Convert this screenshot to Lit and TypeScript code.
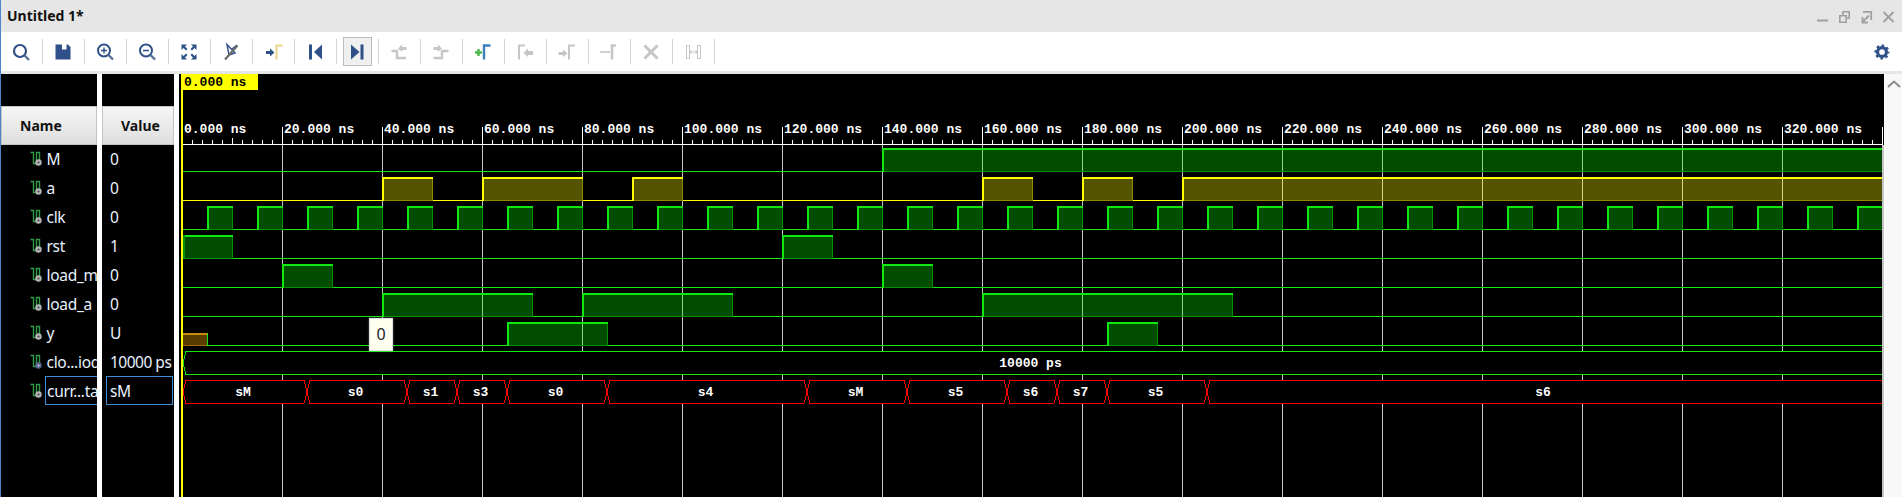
import { LitElement, css, html, svg } from 'lit';
import { customElement } from 'lit/decorators.js';

const X0 = 183;
const X_END = 1883;
const nsToX = (ns: number) => Math.floor(182.5 + ns * 5);
const rowHigh = (i: number) => 148 + i * 29;
const rowLow = (i: number) => 171 + i * 29;

type Tone = { line: string; fill: string; edge: string };
const GREEN: Tone = { line: '#10e810', fill: 'rgba(0,255,0,0.3)', edge: '#009000' };
const YELLOW: Tone = { line: '#ffff00', fill: 'rgba(255,255,0,0.33)', edge: '#8f8a00' };

const clkHighs: [number, number][] = [];
for (let t = 5; t < 340; t += 10) clkHighs.push([t, t + 5]);

const DIGITAL: { row: number; tone: Tone; highs: [number, number][] }[] = [
  { row: 0, tone: GREEN, highs: [[140, 340]] },
  { row: 1, tone: YELLOW, highs: [[40, 50], [60, 80], [90, 100], [160, 170], [180, 190], [200, 340]] },
  { row: 2, tone: GREEN, highs: clkHighs },
  { row: 3, tone: GREEN, highs: [[0, 10], [120, 130]] },
  { row: 4, tone: GREEN, highs: [[20, 30], [140, 150]] },
  { row: 5, tone: GREEN, highs: [[40, 70], [80, 110], [160, 210]] },
  { row: 6, tone: GREEN, highs: [[65, 85], [185, 195]] },
];

const STATES: [string, number, number][] = [
  ['sM', 0, 25], ['s0', 25, 45], ['s1', 45, 55], ['s3', 55, 65], ['s0', 65, 85], ['s4', 85, 125],
  ['sM', 125, 145], ['s5', 145, 165], ['s6', 165, 175], ['s7', 175, 185], ['s5', 185, 205], ['s6', 205, 340],
];

const SIGNALS = [
  ['M', '0'], ['a', '0'], ['clk', '0'], ['rst', '1'], ['load_m', '0'], ['load_a', '0'], ['y', 'U'],
  ['clo...iod', '10000 ps'], ['curr...tat', 'sM'],
];

const NAVY = '#2f5088';
const MUTED = '#c6c6c6';

const gamma = (x: number, color: string) =>
  svg`<path d="M${x} 19.5V5.5H${x + 6}" fill="none" stroke=${color} stroke-width="2"/>`;

const TOOL_ICONS = [
  svg`<circle cx="11" cy="11" r="6" fill="none" stroke=${NAVY} stroke-width="2.2"/><path d="M15.5 15.5L20 20" stroke="#5a6f96" stroke-width="2.4"/>`,
  svg`<path d="M4.5 4.5H11V9.5H15.5V4.5H17L19.5 7V19.5H4.5Z" fill=${NAVY}/>`,
  svg`<circle cx="11" cy="10.5" r="6" fill="none" stroke=${NAVY} stroke-width="2"/><path d="M8 10.5H14M11 7.5V13.5" stroke=${NAVY} stroke-width="1.4"/><path d="M15.5 15L20 19.5" stroke="#5a6f96" stroke-width="2.4"/>`,
  svg`<circle cx="11" cy="10.5" r="6" fill="none" stroke=${NAVY} stroke-width="2"/><path d="M8 10.5H14" stroke=${NAVY} stroke-width="1.6"/><path d="M15.5 15L20 19.5" stroke="#5a6f96" stroke-width="2.4"/>`,
  svg`<path d="M4.5 4.5H10L8 6.5L10.5 9L9 10.5L6.5 8L4.5 10ZM19.5 4.5H14L16 6.5L13.5 9L15 10.5L17.5 8L19.5 10ZM4.5 19.5H10L8 17.5L10.5 15L9 13.5L6.5 16L4.5 14ZM19.5 19.5H14L16 17.5L13.5 15L15 13.5L17.5 16L19.5 14Z" fill=${NAVY}/>`,
  svg`<path d="M8 4.5L16 13L10 15ZM18 5L13 9" fill="none" stroke=${NAVY} stroke-width="1.4"/><path d="M6 19.5L18.5 5.5" stroke="#6a6a6a" stroke-width="2.2"/>`,
  svg`<path d="M5 11H9V8.5L13.5 12.5L9 16.5V14H5Z" fill=${NAVY}/>${gamma(15.5, '#ead38c')}`,
  svg`<path d="M6 4.5H9V19.5H6Z" fill=${NAVY}/><path d="M19 4.5V19.5L11 12Z" fill=${NAVY}/>`,
  svg`<path d="M6 4.5V19.5L14.5 12Z" fill=${NAVY}/><path d="M15.5 4.5H18.5V19.5H15.5Z" fill=${NAVY}/>`,
  svg`<path d="M4.5 11H10V18H19" fill="none" stroke=${MUTED} stroke-width="2.4"/><path d="M19.5 7H15V4.5L11 8.5L15 12V10H19.5Z" fill=${MUTED}/>`,
  svg`<path d="M4.5 18H13V11H19.5" fill="none" stroke=${MUTED} stroke-width="2.4"/><path d="M4.5 7H9V4.5L13 8.5L9 12V10H4.5Z" fill=${MUTED}/>`,
  svg`<path d="M4 12.5H11M7.5 9V16" stroke="#4cb84c" stroke-width="2.4"/><path d="M13 19.5V5.5H19.5" fill="none" stroke="#3d80b8" stroke-width="2.4"/>`,
  svg`${gamma(6, MUTED)}<path d="M20 11H15V8.5L10.5 13L15 17V15H20Z" fill=${MUTED}/>`,
  svg`<path d="M3.5 12H8V9.5L12.5 13.5L8 17V15H3.5Z" fill=${MUTED}/>${gamma(14, MUTED)}`,
  svg`<path d="M3 12H13" stroke=${MUTED} stroke-width="1.6"/><path d="M15 19.5V5.5H19" fill="none" stroke=${MUTED} stroke-width="2.6"/>`,
  svg`<path d="M5.5 5.5L18.5 18.5M18.5 5.5L5.5 18.5" stroke=${MUTED} stroke-width="3"/>`,
  svg`<path d="M5.5 5.5H8.5V18.5H5.5ZM16.5 5.5H19.5V18.5H16.5Z" fill="none" stroke=${MUTED}/><path d="M9 12H16M10.5 10L9 12L10.5 14M14.5 10L16 12L14.5 14" fill="none" stroke=${MUTED}/>`,
];

@customElement('app-root')
export class AppRoot extends LitElement {
  private waveIcon(clock: boolean) {
    return html`<svg class="sig" width="14" height="18" viewBox="0 0 14 18">
      <path d="M0.5 1.5H3.5V12.5H6.5V1.5H9.5V9" fill="none" stroke="#2f9a48" stroke-width="1.4"/>
      <circle cx="8.5" cy="11.5" r="3.2" fill=${clock ? '#56668f' : '#b4b4b4'}/>
      <circle cx="8.5" cy="11.5" r="1.1" fill=${clock ? '#c8d0e8' : '#4a4a4a'}/>
    </svg>`;
  }

  private ruler() {
    const ticks = [];
    for (let ns = 0; ns <= 340; ns += 2) {
      const top = ns % 20 === 0 ? 127 : ns % 10 === 0 ? 138 : 140;
      ticks.push(svg`<rect x=${nsToX(ns)} y=${top} width="1" height=${144 - top} fill="#fff"/>`);
    }
    const labels = [];
    for (let ns = 0; ns <= 320; ns += 20) {
      labels.push(svg`<text class="ruler" x=${nsToX(ns) + 2} y="133">${ns}.000 ns</text>`);
    }
    return svg`<rect x=${X0} y="144" width=${X_END - X0} height="1" fill="#fff"/>${ticks}${labels}`;
  }

  private grid() {
    const lines = [];
    for (let ns = 20; ns <= 340; ns += 20) {
      lines.push(svg`<rect x=${nsToX(ns)} y="145" width="1" height="352" fill="#c4c4c4"/>`);
    }
    return lines;
  }

  private digital(row: number, tone: Tone, highs: [number, number][]) {
    const top = rowHigh(row);
    const low = rowLow(row);
    const parts = [];
    let cursor = row === 6 ? nsToX(5) : X0;
    for (const [a, b] of highs) {
      const xa = Math.max(nsToX(a), X0);
      const xb = nsToX(b);
      if (xa > cursor) parts.push(svg`<rect x=${cursor} y=${low} width=${xa - cursor} height="1" fill=${tone.line}/>`);
      parts.push(svg`
        <rect x=${xa} y=${top} width=${xb - xa} height=${low - top} fill=${tone.fill}/>
        <rect x=${xa} y=${low} width=${xb - xa + 1} height="1" fill=${tone.edge}/>
        <rect x=${xb} y=${top} width="1" height=${low - top} fill=${b === 340 ? 'none' : tone.edge}/>
        <rect x=${xa} y=${top} width=${xb - xa + 1} height="2" fill=${tone.line}/>
        <rect x=${xa} y=${top} width="2" height=${low - top + 1} fill=${a === 0 ? tone.edge : tone.line}/>`);
      cursor = xb + 1;
    }
    if (cursor < X_END) parts.push(svg`<rect x=${cursor} y=${low} width=${X_END - cursor} height="1" fill=${tone.line}/>`);
    return parts;
  }

  private unknownStart() {
    const x1 = nsToX(5);
    return svg`
      <rect x=${X0} y="333" width=${x1 - X0} height="12" fill="#5a3c00"/>
      <rect x=${X0} y="333" width=${x1 - X0} height="2" fill="#c98a10"/>
      <rect x=${X0} y="345" width=${x1 - X0} height="1" fill="#a06a00"/>
      <rect x=${x1} y="333" width="1" height="13" fill=${GREEN.line}/>`;
  }

  private busSegment(row: number, color: string, a: number, b: number, label: string) {
    const top = rowHigh(row) + 0.5;
    const low = rowLow(row) + 0.5;
    const mid = (top + low) / 2;
    const xa = nsToX(a);
    const xb = nsToX(b);
    const startTip = a === 0 ? 4 : 3;
    const left = a === 0 ? `${X0},${mid}` : `${xa},${mid}`;
    const right = b === 340 ? `${X_END},${top} ${X_END},${low}` : `${xb - 3},${top} ${xb},${mid} ${xb - 3},${low}`;
    const points = `${left} ${xa + startTip},${top} ${right} ${xa + startTip},${low}`;
    const center = (xa + Math.min(xb, X_END)) / 2 - 1.5;
    return svg`<polygon points=${points} fill="#000" stroke=${color} stroke-width="1"/>
      <text class="bus" x=${center} y=${mid + 4}>${label}</text>`;
  }

  render() {
    return html`
      <div class="title-bar">
        <span class="title">Untitled 1*</span>
        <div class="win-controls">
          <svg width="88" height="20" viewBox="0 0 88 20">
            <path d="M9 14.5H20" stroke="#a0a0a0" stroke-width="2"/>
            <path d="M31.8 9.8H38.2V16.2H31.8ZM35 9V5.8H41.2V12H38.5" fill="none" stroke="#a0a0a0" stroke-width="1.6"/>
            <path d="M55 5.8H63.2V14M54.5 16L61 9.5M54.5 11V16.5H60" fill="none" stroke="#a0a0a0" stroke-width="1.8"/>
            <path d="M75.5 6L85.5 16M85.5 6L75.5 16" stroke="#a0a0a0" stroke-width="2"/>
          </svg>
        </div>
      </div>
      <div class="toolbar">
        ${TOOL_ICONS.map(
          (icon, i) => html`<div class="tool">
            <span class=${i === 8 ? 'tool-face active' : 'tool-face'}>
              <svg width="24" height="24" viewBox="0 0 24 24">${icon}</svg>
            </span>
          </div>`,
        )}
        <svg class="gear" width="16" height="16" viewBox="0 0 18 18">
          <circle cx="9" cy="9" r="5" fill="none" stroke=${NAVY} stroke-width="3.6"/>
          <circle cx="9" cy="9" r="7.2" fill="none" stroke=${NAVY} stroke-width="2.6" stroke-dasharray="2.83 2.83" stroke-dashoffset="1.4"/>
        </svg>
      </div>
      <div class="divider"></div>
      <div class="main">
        <div class="col names">
          <div class="head name-head">Name</div>
          ${SIGNALS.map(
            ([name], i) => html`<div class="row name-row">
              ${this.waveIcon(i === 7)}
              <span class=${i === 8 ? 'label picked' : 'label'}>${name}</span>
            </div>`,
          )}
        </div>
        <div class="col values">
          <div class="head value-head">Value</div>
          ${SIGNALS.map(
            ([, value], i) => html`<div class="row value-row">
              <span class=${i === 8 ? 'val picked' : 'val'}>${value}</span>
            </div>`,
          )}
        </div>
        <div class="wave">
          <svg width="1705" height="423" viewBox="179 74 1705 423" shape-rendering="crispEdges">
            ${this.grid()}
            ${this.ruler()}
            ${DIGITAL.map((d) => this.digital(d.row, d.tone, d.highs))}
            ${this.unknownStart()}
            ${this.busSegment(7, GREEN.line, 0, 340, '10000 ps')}
            ${STATES.map(([label, a, b]) => this.busSegment(8, '#ff0000', a, b, label))}
            <rect x="181" y="74" width="2" height="423" fill="#ffff00"/>
            <rect x="1882" y="145" width="2" height="352" fill="#c4c4c4"/>
            <rect x="182" y="74" width="76" height="16" fill="#ffff00"/>
            <text class="marker" x="184" y="86">0.000 ns</text>
          </svg>
          <div class="tip">0</div>
        </div>
        <div class="scroll">
          <svg width="14" height="10" viewBox="0 0 14 10">
            <path d="M1 8L7 2.5L13 8" fill="none" stroke="#8a8a8a" stroke-width="2"/>
          </svg>
        </div>
      </div>
    `;
  }

  static styles = css`
    :host {
      display: block;
      box-sizing: border-box;
      width: 1902px;
      height: 497px;
      overflow: hidden;
      border-left: 1px solid #4a86d0;
      background: #fff;
      font-family: 'Noto Sans', sans-serif;
    }

    .title-bar {
      display: flex;
      align-items: center;
      justify-content: space-between;
      height: 32px;
      padding: 0 6px 2px 6px;
      box-sizing: border-box;
      background: #e6e6e6;
    }

    .title {
      font-size: 14px;
      font-weight: 700;
      color: #111;
    }

    .win-controls {
      display: flex;
      align-items: center;
      height: 20px;
      margin-top: 2px;
    }

    .toolbar {
      display: flex;
      align-items: center;
      height: 39px;
      background: #fff;
    }

    .tool {
      display: flex;
      align-items: center;
      justify-content: center;
      box-sizing: border-box;
      width: 42px;
      height: 25px;
      border-right: 1px solid #d4d4d4;
    }

    .tool-face {
      display: flex;
      align-items: center;
      justify-content: center;
      box-sizing: border-box;
      flex: none;
      width: 29px;
      height: 29px;
      border: 1px solid transparent;
    }

    .tool-face svg {
      flex: none;
      margin-right: 2px;
    }

    .tool-face.active {
      border-color: #bdbdbd;
      background: #f0f0f0;
    }

    .gear {
      margin-left: auto;
      margin-right: 12px;
    }

    .divider {
      height: 3px;
      background: #e6e6e6;
    }

    .main {
      display: flex;
      height: 423px;
    }

    .col {
      flex: none;
      overflow: hidden;
      background: #000;
      padding-top: 32px;
      box-sizing: border-box;
    }

    .names {
      width: 96px;
      margin-right: 5px;
    }

    .values {
      width: 72px;
      margin-right: 5px;
    }

    .head {
      box-sizing: border-box;
      height: 39px;
      border: 1px solid #c4c4c4;
      background: linear-gradient(#f6f6f6, #dedede);
      color: #111;
      font-size: 14px;
      font-weight: 700;
      line-height: 37px;
    }

    .name-head {
      padding-left: 18px;
    }

    .value-head {
      padding-left: 18px;
    }

    .row {
      display: flex;
      align-items: center;
      height: 29px;
      color: #e8f2ff;
      font-size: 15.5px;
      letter-spacing: -0.3px;
      white-space: nowrap;
    }

    .value-row {
      letter-spacing: -0.5px;
    }

    .sig {
      flex: none;
      margin-left: 29px;
    }

    .label {
      margin-left: 2.5px;
      margin-bottom: 2px;
    }

    .val {
      margin-left: 8px;
      margin-bottom: 2px;
    }

    .picked {
      box-sizing: border-box;
      display: flex;
      align-items: center;
      height: 29px;
      margin-top: -2px;
      margin-bottom: 0;
      border: 1px solid #3f8fd8;
    }

    .label.picked {
      flex: none;
      width: 60px;
      margin-left: 1px;
      padding-left: 1px;
    }

    .val.picked {
      flex: none;
      width: 67px;
      margin-left: 4px;
      padding-left: 3px;
    }

    .wave {
      position: relative;
      flex: none;
      width: 1705px;
      background: #000;
    }

    .wave svg {
      display: block;
    }

    .ruler,
    .marker,
    .bus {
      font-family: 'Liberation Mono', monospace;
      font-size: 13px;
      font-weight: 700;
    }

    .ruler {
      fill: #fff;
    }

    .marker {
      fill: #000;
    }

    .bus {
      fill: #fff;
      text-anchor: middle;
    }

    .tip {
      position: absolute;
      left: 190px;
      top: 244px;
      box-sizing: border-box;
      width: 24px;
      height: 33px;
      border: 1px solid #ddd;
      background: #fffff0;
      color: #223;
      font-size: 16px;
      line-height: 31px;
      text-align: center;
      box-shadow: 0 0 2px rgba(255, 255, 255, 0.4);
    }

    .scroll {
      flex: 1;
      display: flex;
      justify-content: center;
      box-sizing: border-box;
      padding-top: 5px;
      border-left: 1px solid #fff;
      background: #f8f8f8;
    }

    .scroll svg {
      display: block;
    }
  `;
}
